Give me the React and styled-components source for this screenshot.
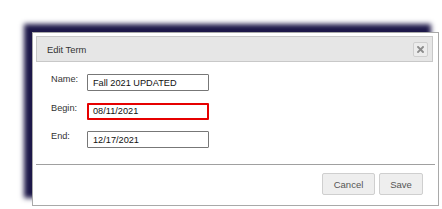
import React from 'react'
import styled, { createGlobalStyle } from 'styled-components'

const GlobalStyle = createGlobalStyle`
    html, body {
        margin: 0;
        padding: 0;
        background: #ffffff;
        font-family: "Liberation Sans", Arial, sans-serif;
    }
`

const Page = styled.div`
    width: 442px;
    height: 209px;
    padding: 32px 0 0 32px;
    box-sizing: border-box;
    overflow: hidden;
`

const Dialog = styled.div`
    width: 407px;
    height: 174px;
    box-sizing: border-box;
    border: 1px solid #a9a9a9;
    background: #ffffff;
    padding: 3px 3px 0 3px;
    display: flex;
    flex-direction: column;
    box-shadow: -8px -8px 5px 0 #1d1849;
`

const TitleBar = styled.div`
    height: 26px;
    box-sizing: border-box;
    border: 1px solid #c8c8c8;
    background: #e6e6e6;
    display: flex;
    align-items: center;
    justify-content: space-between;
    padding: 0 4px 0 10px;
    margin-right: 2px;
`

const Title = styled.span`
    font-size: 9.4px;
    color: #333333;
`

const CloseButton = styled.button`
    width: 15px;
    height: 15px;
    padding: 0;
    box-sizing: border-box;
    border: 1px solid #cfcfcf;
    border-radius: 2px;
    background: #ececec;
    display: flex;
    align-items: center;
    justify-content: center;
`

const Form = styled.div`
    display: grid;
    grid-template-columns: 36px 122px;
    grid-auto-rows: 17px;
    row-gap: 11.5px;
    padding: 12px 0 0 15px;
    height: 102px;
    box-sizing: border-box;
`

const Label = styled.label`
    font-size: 9.2px;
    color: #333333;
    line-height: 1;
    padding-top: 1px;
`

const Input = styled.div`
    box-sizing: border-box;
    height: 17px;
    border: ${p => (p.$error ? '2px solid #e60000' : '1px solid #777777')};
    border-radius: 1px;
    padding-left: ${p => (p.$error ? '4px' : '5px')};
    display: flex;
    align-items: center;
    font-size: 9.2px;
    color: #111111;
`

const Footer = styled.div`
    border-top: 1px solid #a0a0a0;
    display: flex;
    justify-content: flex-end;
    gap: 4px;
    padding: 8px 12px 0 0;
`

const Button = styled.button`
    height: 22px;
    width: ${p => p.$w}px;
    box-sizing: border-box;
    border: 1px solid #cfcfcf;
    border-radius: 2px;
    background: #eeeeee;
    color: #555555;
    font-family: "Liberation Sans", Arial, sans-serif;
    font-size: 9.5px;
    padding: 0;
`

const CloseIcon = () => (
    <svg width="7" height="7" viewBox="0 0 7 7">
        <path d="M1 1 L6 6 M6 1 L1 6" stroke="#8c8c8c" strokeWidth="1.9" strokeLinecap="square" />
    </svg>
)

const App = () => (
    <>
        <GlobalStyle />
        <Page>
            <Dialog>
                <TitleBar>
                    <Title>Edit Term</Title>
                    <CloseButton aria-label="close">
                        <CloseIcon />
                    </CloseButton>
                </TitleBar>
                <Form>
                    <Label>Name:</Label>
                    <Input>Fall 2021 UPDATED</Input>
                    <Label>Begin:</Label>
                    <Input $error>08/11/2021</Input>
                    <Label>End:</Label>
                    <Input>12/17/2021</Input>
                </Form>
                <Footer>
                    <Button $w={53}>Cancel</Button>
                    <Button $w={44}>Save</Button>
                </Footer>
            </Dialog>
        </Page>
    </>
)

export default App
